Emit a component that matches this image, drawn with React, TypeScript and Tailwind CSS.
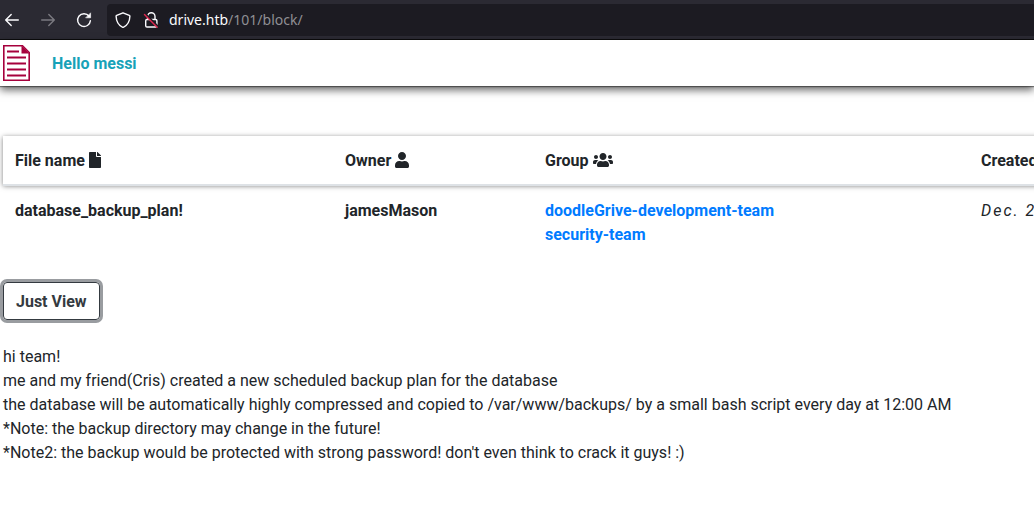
import { FaFile, FaUser, FaUsers } from "react-icons/fa";

function BackIcon() {
  return (
    <svg width="16" height="16" viewBox="0 0 16 16" fill="none" stroke="currentColor" strokeWidth="1.4" strokeLinecap="round" strokeLinejoin="round" aria-hidden="true">
      <path d="M14.3 8H1.7M7.2 2.5 1.7 8l5.5 5.5" />
    </svg>
  );
}

function ForwardIcon() {
  return (
    <svg width="16" height="16" viewBox="0 0 16 16" fill="none" stroke="currentColor" strokeWidth="1.4" strokeLinecap="round" strokeLinejoin="round" aria-hidden="true">
      <path d="M1.7 8h12.6M8.8 2.5 14.3 8l-5.5 5.5" />
    </svg>
  );
}

function ReloadIcon() {
  return (
    <svg width="16" height="16" viewBox="0 0 16 16" fill="none" stroke="currentColor" strokeWidth="1.4" strokeLinecap="round" aria-hidden="true">
      <path d="M13.1 4.2A6.4 6.4 0 1 0 14.4 8.6" />
      <path d="M14.6 1.2v4.6h-4.6z" fill="currentColor" stroke="currentColor" strokeWidth="0.6" strokeLinejoin="round" />
    </svg>
  );
}

function ShieldIcon() {
  return (
    <svg width="16" height="16" viewBox="0 0 16 16" fill="none" stroke="currentColor" strokeWidth="1.4" strokeLinejoin="round" aria-hidden="true">
      <path d="M8 .8 14.3 3.4c.5.2.6.5.6.9-.2 5.2-2.4 8.9-6.3 10.9q-.6.3-1.2 0C3.5 13.2 1.3 9.5 1.1 4.3c0-.4.1-.7.6-.9z" />
    </svg>
  );
}

function InsecureLockIcon() {
  return (
    <svg width="16" height="16" viewBox="0 0 16 16" fill="none" strokeLinecap="round" aria-hidden="true">
      <path d="M4.6 7.2V4.400a3.700 3.700 0 0 1 7.400 0V7.200" stroke="currentColor" strokeWidth="1.4" />
      <rect x="2.7" y="7.500" width="11.200" height="7.500" rx="1.3" stroke="currentColor" strokeWidth="1.4" />
      <path d="m2.500 1.900 12 12" stroke="#1c1b22" strokeWidth="1.800" />
      <path d="m1.5 2.6 12.600 12.600" stroke="#e22850" strokeWidth="1.4" />
    </svg>
  );
}

function DocumentLogo() {
  return (
    <svg width="27" height="36" viewBox="0 0 27 36" fill="none" stroke="#a6003c" aria-hidden="true">
      <path d="M.8.8H19.5L26.2 7.5V35.2H.8z" strokeWidth="1.600" />
      <path d="M18.500 .5V8.500h8z" fill="#a6003c" stroke="none" />
      <path d="M4 6.500h12M4 12.500h19M4 18.500h19M4 24.500h19M4 30.500h19" strokeWidth="1.9" />
    </svg>
  );
}

function BrowserBar() {
  return (
    <div className="flex h-10 items-center border-b border-[#0c0c0d] bg-[#2b2a33] pl-1 text-[#fbfbfe]">
      <button type="button" aria-label="Back"><BackIcon /></button>
      <button type="button" aria-label="Forward" disabled className="ml-5 text-[#7b7a81]"><ForwardIcon /></button>
      <button type="button" aria-label="Reload" className="ml-5"><ReloadIcon /></button>
      <div className="ml-[15px] flex h-8 flex-1 items-center rounded-l bg-[#1c1b22] pl-2">
        <ShieldIcon />
        <span className="ml-3"><InsecureLockIcon /></span>
        <span className="ml-2.5 font-['Noto_Sans',sans-serif] text-[14px] leading-6">
          drive.htb<span className="text-[#8f8f94]">/101/block/</span>
        </span>
      </div>
    </div>
  );
}

const notes = [
  "hi team!",
  "me and my friend(Cris) created a new scheduled backup plan for the database",
  "the database will be automatically highly compressed and copied to /var/www/backups/ by a small bash script every day at 12:00 AM",
  "*Note: the backup directory may change in the future!",
  "*Note2: the backup would be protected with strong password! don't even think to crack it guys! :)",
];

export default function App() {
  return (
    <div className="min-h-screen overflow-x-hidden bg-white font-[Roboto,sans-serif] text-base leading-6 text-[#212529]">
      <BrowserBar />
      <header className="flex h-[46px] items-center pl-[3px] shadow-[0_4px_8px_#00000099,0_1px_1px_#00000066]">
        <DocumentLogo />
        <span className="ml-[22px] pt-0.5 font-bold text-[#17a2b8]">Hello messi</span>
      </header>

      <main className="pt-[50px] pl-[3px]">
        <table className="w-full min-w-[1166px] table-fixed border-collapse text-left">
          <colgroup>
            <col className="w-[330px]" />
            <col className="w-[200px]" />
            <col className="w-[436px]" />
            <col />
          </colgroup>
          <thead className="shadow-[0_1px_5px_#00000080]">
            <tr className="border-b-2 border-[#dee2e6]">
              <th className="px-3 pt-[13px] pb-[11px] font-bold">File name <FaFile className="inline-block h-4 w-3 align-[-2px]" /></th>
              <th className="px-3 pt-[13px] pb-[11px] font-bold">Owner <FaUser className="inline-block h-4 w-[14px] align-[-2px]" /></th>
              <th className="px-3 pt-[13px] pb-[11px] font-bold">Group <FaUsers className="inline-block h-4 w-5 align-[-2px]" /></th>
              <th className="px-3 pt-[13px] pb-[11px] font-bold">Created</th>
            </tr>
          </thead>
          <tbody>
            <tr className="align-top">
              <td className="px-3 pt-[13px] pb-[11px] font-bold">database_backup_plan!</td>
              <td className="px-3 pt-[13px] pb-[11px] font-bold">jamesMason</td>
              <td className="px-3 pt-[13px] pb-[11px] font-bold text-[#007bff]">
                <a href="#development" className="block">doodleGrive-development-team</a>
                <a href="#security" className="block">security-team</a>
              </td>
              <td className="px-3 pt-[13px] pb-[11px] tracking-[2px] italic">Dec. 2</td>
            </tr>
          </tbody>
        </table>

        <button type="button" className="mt-6 rounded border border-[#343a40] px-3 pt-[7px] pb-[5px] font-bold text-[#343a40] shadow-[0_0_0_3px_#999ca0]">
          Just View
        </button>

        <div className="mt-[25px] pb-10">
          {notes.map((line) => <p key={line}>{line}</p>)}
        </div>
      </main>
    </div>
  );
}
